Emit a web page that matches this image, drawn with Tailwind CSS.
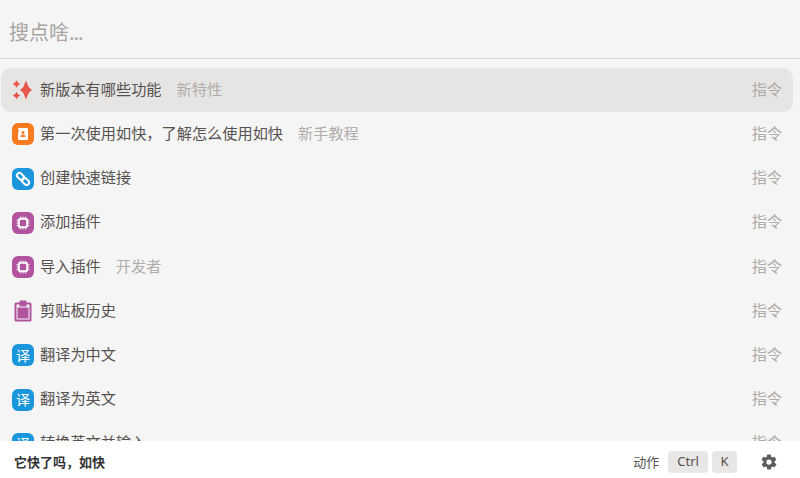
<!DOCTYPE html>
<html lang="zh-CN">
<head>
  <meta charset="UTF-8">
  <title>如快</title>
  <script src="https://cdn.jsdelivr.net/npm/@tailwindcss/browser@4"></script>
</head>
<body class="w-[800px] h-[478px] overflow-hidden bg-[#f5f5f5] font-['Noto_Sans_CJK_SC','Noto_Sans',sans-serif] text-[#555250]">
  <div class="flex flex-col h-[478px]">
    <!-- search -->
    <div class="h-[59px] shrink-0 flex items-center pl-[9px] pt-[5px] border-b border-[#d3d2d0] text-[20px] text-[#a8a5a2]">搜点啥<span class="tracking-[-1px]">...</span></div>

    <!-- list -->
    <div class="relative flex-1 overflow-hidden pt-[9.2px] pl-px pr-[7px]">
      <div class="flex items-center h-[44.2px] rounded-[10px] bg-[#e6e5e3] pl-[11px] pr-[11px] text-[15.2px]">
        <svg class="w-[20px] h-[20px] shrink-0" viewBox="0 0 20 20" fill="#e8574a"><path d="M14 .5l2.800 6.700L20 10l-3.200 2.800L14 19.500l-2.800-6.700L8 10l3.200-2.800z"/><path d="M4.500.2l1.400 2.400 2.400 1.400-2.400 1.400-1.400 2.400-1.400-2.400L.7 4l2.400-1.400zM4.500 11.700l1.400 2.400 2.400 1.400-2.400 1.400-1.400 2.400-1.400-2.400-2.400-1.400 2.400-1.400z"/></svg>
        <div class="flex flex-1 pb-[4px]">
          <span class="ml-[8px]">新版本有哪些功能</span><span class="ml-[15px] text-[#b0adaa]">新特性</span>
          <span class="ml-auto text-[#aeaba8]">指令</span>
        </div>
      </div>
      <div class="flex items-center h-[44.2px] pl-[11px] pr-[11px] text-[15.2px]">
        <div class="w-[22px] h-[22px] shrink-0 rounded-[6px] bg-[#f97a1f] flex items-center justify-center">
          <svg class="w-[14px] h-[14px]" viewBox="0 0 14 14"><rect x="2" y="1" width="10" height="12" rx="1" fill="#fff"/><rect x="1" y="3" width="2" height="1.500" fill="#f97a1f"/><circle cx="7" cy="5.500" r="1.500" fill="#f97a1f"/><path fill="#f97a1f" d="M4.500 10c0-1.500 1-2.500 2.500-2.500s2.500 1 2.500 2.500z"/></svg>
        </div>
        <div class="flex flex-1 pb-[4px]">
          <span class="ml-[6px]">第一次使用如快，了解怎么使用如快</span><span class="ml-[15px] text-[#b0adaa]">新手教程</span>
          <span class="ml-auto text-[#aeaba8]">指令</span>
        </div>
      </div>
      <div class="flex items-center h-[44.2px] pl-[11px] pr-[11px] text-[15.2px]">
        <div class="w-[22px] h-[22px] shrink-0 rounded-[6px] bg-[#1a96dc] flex items-center justify-center">
          <svg class="w-[18px] h-[18px]" viewBox="0 0 18 18" fill="none" stroke="#fff" stroke-width="2"><rect x="2.500" y="4" width="8" height="5" rx="2.500" transform="rotate(45 6.500 6.500)"/><rect x="7.500" y="9" width="8" height="5" rx="2.500" transform="rotate(45 11.500 11.500)"/></svg>
        </div>
        <div class="flex flex-1 pb-[4px]">
          <span class="ml-[6px]">创建快速链接</span>
          <span class="ml-auto text-[#aeaba8]">指令</span>
        </div>
      </div>
      <div class="flex items-center h-[44.2px] pl-[11px] pr-[11px] text-[15.2px]">
        <div class="w-[22px] h-[22px] shrink-0 rounded-[6px] bg-[#b2539f] flex items-center justify-center">
          <svg class="w-[14px] h-[14px]" viewBox="0 0 14 14" fill="none" stroke="#fff"><rect x="2.800" y="2.800" width="8.400" height="8.400" rx="1.800" stroke-width="2"/><path stroke-width=".8" d="M4.500 .5v1.500M7 .5v1.500M9.500 .5v1.500M4.500 12v1.500M7 12v1.500M9.500 12v1.500M.5 4.500h1.500M.5 7h1.500M.5 9.500h1.500M12 4.500h1.500M12 7h1.500M12 9.500h1.500"/></svg>
        </div>
        <div class="flex flex-1 pb-[4px]">
          <span class="ml-[6px]">添加插件</span>
          <span class="ml-auto text-[#aeaba8]">指令</span>
        </div>
      </div>
      <div class="flex items-center h-[44.2px] pl-[11px] pr-[11px] text-[15.2px]">
        <div class="w-[22px] h-[22px] shrink-0 rounded-[6px] bg-[#b2539f] flex items-center justify-center">
          <svg class="w-[14px] h-[14px]" viewBox="0 0 14 14" fill="none" stroke="#fff"><rect x="2.800" y="2.800" width="8.400" height="8.400" rx="1.800" stroke-width="2"/><path stroke-width=".8" d="M4.500 .5v1.500M7 .5v1.500M9.500 .5v1.500M4.500 12v1.500M7 12v1.500M9.500 12v1.500M.5 4.500h1.500M.5 7h1.500M.5 9.500h1.500M12 4.500h1.500M12 7h1.500M12 9.500h1.500"/></svg>
        </div>
        <div class="flex flex-1 pb-[4px]">
          <span class="ml-[6px]">导入插件</span><span class="ml-[15px] text-[#b0adaa]">开发者</span>
          <span class="ml-auto text-[#aeaba8]">指令</span>
        </div>
      </div>
      <div class="flex items-center h-[44.2px] pl-[11px] pr-[11px] text-[15.2px]">
        <svg class="w-[22px] h-[22px] shrink-0" viewBox="0 0 22 22"><path fill="#b2539f" d="M4 2.500h3.500V1.500a1 1 0 0 1 1-1h5a1 1 0 0 1 1 1v1H18a1.500 1.500 0 0 1 1.500 1.500v16A1.500 1.500 0 0 1 18 21.500H4A1.500 1.500 0 0 1 2.500 20V4A1.500 1.500 0 0 1 4 2.500z"/><path fill="#f5f5f5" d="M4.500 4.500h3V6.500h7V4.500h3v15h-13z"/><rect x="5.500" y="7.500" width="11" height="11" fill="#b2539f"/></svg>
        <div class="flex flex-1 pb-[4px]">
          <span class="ml-[6px]">剪贴板历史</span>
          <span class="ml-auto text-[#aeaba8]">指令</span>
        </div>
      </div>
      <div class="flex items-center h-[44.2px] pl-[11px] pr-[11px] text-[15.2px]">
        <div class="w-[22px] h-[22px] shrink-0 rounded-[6px] bg-[#1a96dc] flex items-center justify-center text-white text-[14px]">译</div>
        <div class="flex flex-1 pb-[4px]">
          <span class="ml-[6px]">翻译为中文</span>
          <span class="ml-auto text-[#aeaba8]">指令</span>
        </div>
      </div>
      <div class="flex items-center h-[44.2px] pl-[11px] pr-[11px] text-[15.2px]">
        <div class="w-[22px] h-[22px] shrink-0 rounded-[6px] bg-[#1a96dc] flex items-center justify-center text-white text-[14px]">译</div>
        <div class="flex flex-1 pb-[4px]">
          <span class="ml-[6px]">翻译为英文</span>
          <span class="ml-auto text-[#aeaba8]">指令</span>
        </div>
      </div>
      <div class="flex items-center h-[44.2px] pl-[11px] pr-[11px] text-[15.2px]">
        <div class="w-[22px] h-[22px] shrink-0 rounded-[6px] bg-[#1a96dc] flex items-center justify-center text-white text-[14px]">译</div>
        <div class="flex flex-1 pb-[4px]">
          <span class="ml-[6px]">转换英文并输入</span>
          <span class="ml-auto text-[#aeaba8]">指令</span>
        </div>
      </div>
    </div>

    <!-- footer -->
    <div class="relative z-10 h-[37px] shrink-0 bg-white flex items-center pl-[14px] pr-[22px] pt-[5px]">
      <span class="text-[13px] font-bold text-[#333]">它快了吗，如快</span>
      <span class="ml-auto text-[13px] text-[#555250]">动作</span>
      <span class="ml-[9px] h-[22px] px-[9px] rounded-[4px] bg-[#e8e7e5] flex items-center text-[13px] font-['Noto_Sans',sans-serif]">Ctrl</span>
      <span class="ml-[4px] h-[22px] px-[8.5px] rounded-[4px] bg-[#e8e7e5] flex items-center text-[13px] font-['Noto_Sans',sans-serif]">K</span>
      <svg class="ml-[23px] w-[18px] h-[18px]" viewBox="0 0 24 24" fill="#5f5d5b"><path fill-rule="evenodd" d="M19.400 13a7.500 7.500 0 0 0 0-2l2.100-1.600a.5.5 0 0 0 .1-.6l-2-3.500a.5.5 0 0 0-.6-.2l-2.500 1a7.300 7.300 0 0 0-1.700-1l-.4-2.700a.5.5 0 0 0-.5-.4h-4a.5.5 0 0 0-.5.4l-.4 2.700a7.300 7.300 0 0 0-1.700 1l-2.500-1a.5.5 0 0 0-.6.2l-2 3.500a.5.5 0 0 0 .1.6L4.600 11a7.500 7.500 0 0 0 0 2l-2.100 1.600a.5.5 0 0 0-.1.6l2 3.500c.1.200.4.300.6.200l2.500-1c.5.400 1.100.700 1.700 1l.4 2.700c0 .200.2.400.5.400h4c.3 0 .5-.2.500-.4l.4-2.700c.6-.3 1.200-.6 1.700-1l2.500 1c.2.100.5 0 .6-.2l2-3.500a.5.5 0 0 0-.1-.6zM12 15.500a3.500 3.500 0 1 1 0-7 3.500 3.500 0 0 1 0 7z"/></svg>
    </div>
  </div>
</body>
</html>
